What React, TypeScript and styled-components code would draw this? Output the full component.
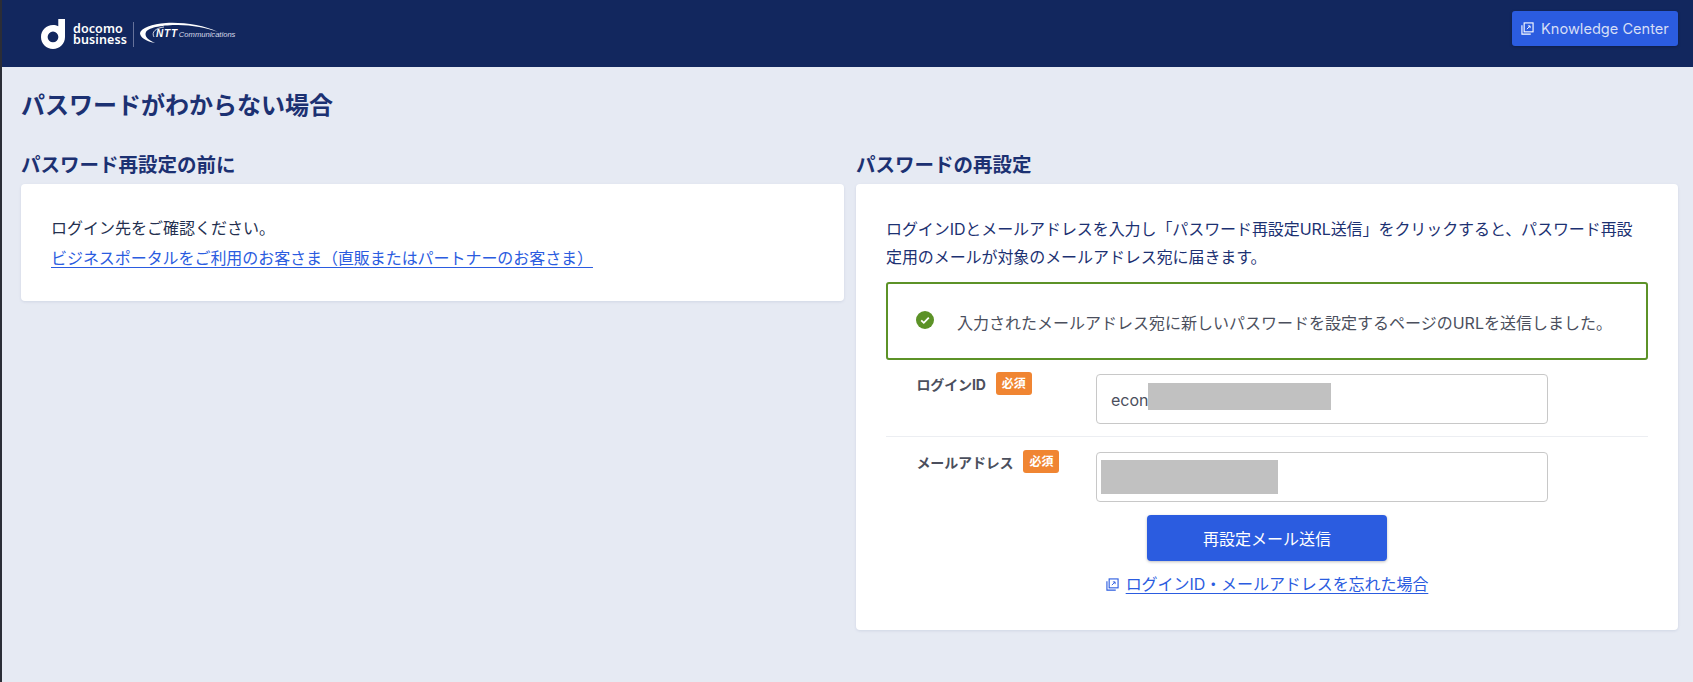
import React from "react";
import styled, { createGlobalStyle } from "styled-components";

const Global = createGlobalStyle`
  html, body { margin: 0; padding: 0; background: #e6eaf3; }
  body { font-family: Inter, "Noto Sans CJK JP", sans-serif; color: #1c3172; }
  * { box-sizing: border-box; }
`;

const Page = styled.div`
  position: relative;
  width: 1693px;
  height: 682px;
  overflow: hidden;
  border-left: 2px solid #2b2d36;
  background: #e6eaf3;
`;

const Header = styled.header`
  height: 67px;
  background: #12275e;
  display: flex;
  align-items: center;
  justify-content: space-between;
  padding: 0 15px 0 39px;
`;

const LogoRow = styled.div`
  display: flex;
  align-items: center;
  height: 67px;
  padding-top: 1px;
`;

const DocomoText = styled.div`
  font-family: "Noto Sans", sans-serif;
  color: #fff;
  font-size: 12.5px;
  font-weight: 600;
  line-height: 11.5px;
  letter-spacing: 0.1px;
  margin-left: 8px;
  width: 52px;
`;

const LogoDivider = styled.span`
  width: 1px;
  height: 25px;
  background: #66729a;
  margin: 0 6px 0 8px;
`;

const NttMark = styled.div`
  position: relative;
  width: 94px;
  height: 24px;
`;

const NttText = styled.span`
  position: absolute;
  left: 16px;
  top: 6px;
  color: #fff;
  font-family: "Liberation Sans", sans-serif;
  font-style: italic;
  font-weight: 700;
  font-size: 10px;
  letter-spacing: 0.8px;
  white-space: nowrap;
  line-height: 12px;
`;

const CommText = styled.span`
  font-weight: 400;
  font-size: 7.6px;
  letter-spacing: 0;
  color: #d8dcea;
  margin-left: 1px;
`;

const KnowledgeButton = styled.a`
  display: flex;
  align-items: center;
  gap: 7px;
  width: 166px;
  height: 35px;
  margin-top: -10px;
  padding-left: 9px;
  background: #2b5ce0;
  border-radius: 3px;
  color: #d5def6;
  font-size: 14.6px;
  box-shadow: 0 1px 3px rgba(0, 0, 0, 0.25);
`;

const Title = styled.h1`
  margin: 0;
  padding: 23px 0 0 19px;
  height: 73px;
  font-size: 24px;
  line-height: 32px;
  font-weight: 700;
  color: #1c3172;
`;

const Columns = styled.div`
  display: grid;
  grid-template-columns: 823px 822px;
  gap: 12px;
  padding-left: 19px;
  align-items: start;
`;

const Section = styled.section``;

const SectionTitle = styled.h2`
  margin: 0;
  height: 44px;
  padding-top: 12px;
  font-size: 19.5px;
  line-height: 26px;
  font-weight: 700;
  color: #1c3172;
`;

const Card = styled.div`
  background: #fff;
  border-radius: 4px;
  box-shadow: 0 1px 3px rgba(30, 50, 110, 0.1);
`;

const LeftCard = styled(Card)`
  height: 117px;
  padding: 29px 30px;
  font-size: 16px;
  line-height: 30px;
  color: #24304f;
`;

const RightCard = styled(Card)`
  height: 446px;
  padding: 31px 30px 0;
`;

const TextLink = styled.a`
  color: #2b5ce0;
  text-decoration: underline;
  text-underline-offset: 3px;
  letter-spacing: -0.06px;
  display: block;
`;

const Lead = styled.p`
  margin: 0;
  font-size: 16px;
  line-height: 28px;
  letter-spacing: -0.08px;
  color: #1c3172;
`;

const Alert = styled.div`
  height: 78px;
  margin-top: 11px;
  display: flex;
  align-items: center;
  padding: 0 20px 3px 28px;
  gap: 23px;
  border: 2px solid #5c9227;
  border-radius: 3px;
  color: #4b4f5d;
  font-size: 16px;
`;

const AlertText = styled.span`
  padding-top: 4px;
  white-space: nowrap;
`;

const FormRow = styled.div<{ $pt: number; $h: number; $b?: boolean }>`
  display: grid;
  grid-template-columns: 210px 452px;
  padding: ${({ $pt }) => $pt}px 0 0;
  height: ${({ $h }) => $h}px;
  border-bottom: ${({ $b }) => ($b ? "1px solid #eceef2" : "none")};
`;

const LabelCell = styled.div`
  display: flex;
  align-items: flex-start;
  gap: 10px;
  padding-left: 30.5px;
  font-size: 14px;
  line-height: 22px;
  font-weight: 700;
  letter-spacing: -0.15px;
  color: #4b4f5d;
`;

const Required = styled.span`
  width: 36px;
  height: 23px;
  margin-top: -2px;
  background: #f08532;
  color: #fff;
  border-radius: 3px;
  font-size: 12px;
  line-height: 23px;
  font-weight: 700;
  text-align: center;
`;

const InputBox = styled.div`
  position: relative;
  height: 50px;
  border: 1px solid #c8c8c8;
  border-radius: 4px;
  padding: 1px 14px 0;
  font-size: 16px;
  line-height: 48px;
  color: #4b4f5d;
`;

const Redaction = styled.div<{ $l: number; $t: number; $w: number; $h: number }>`
  position: absolute;
  left: ${({ $l }) => $l}px;
  top: ${({ $t }) => $t}px;
  width: ${({ $w }) => $w}px;
  height: ${({ $h }) => $h}px;
  background: #c1c1c1;
`;

const Actions = styled.div`
  display: flex;
  flex-direction: column;
  align-items: center;
`;

const SubmitButton = styled.button`
  width: 240px;
  height: 46px;
  border: 0;
  border-radius: 4px;
  background: #2b5ce0;
  color: #fff;
  font-family: inherit;
  font-size: 16px;
  box-shadow: 0 1px 3px rgba(0, 0, 0, 0.25);
`;

const ForgotRow = styled.div`
  display: flex;
  align-items: center;
  gap: 7px;
  margin-top: 11px;
  font-size: 16px;
  line-height: 24px;
`;

const ExternalIcon = ({ color, size }: { color: string; size: number }) => (
  <svg width={size} height={size} viewBox="0 0 14 14" fill="none" stroke={color} strokeWidth="1.2">
    <path d="M1 3.5V13H10.5" />
    <rect x="3.4" y="1" width="9.6" height="9.6" />
    <path d="M6.3 7.7L9.6 4.4M7.4 4.2H9.8V6.6" strokeWidth="1" />
  </svg>
);

export default function App() {
  return (
    <Page>
      <Global />
      <Header>
        <LogoRow>
          <svg width="24" height="32" viewBox="0 0 25 33">
            <path fill="#fff" fillRule="evenodd" d="M18 1H25V19.5C25 26.5 19.5 32 12.5 32S0 26.5 0 19.5 5.5 7 12.5 7C14.5 7 16.4 7.5 18 8.3ZM12.5 14A5.6 5.6 0 1 0 12.5 25.2 5.6 5.6 0 1 0 12.5 14Z" />
          </svg>
          <DocomoText>docomo<br />business</DocomoText>
          <LogoDivider />
          <NttMark>
            <svg width="94" height="24" viewBox="0 0 94 24">
              <path fill="#fff" d="M78 10C64 3 42 0 26 1 12 2 1 6 0 11 0 15 5 19 15 21 8 18 4 14 6 10 9 5 24 3 38 3 52 3 67 6 78 10Z" />
              <path fill="none" stroke="#fff" strokeWidth="0.8" d="M14 15C11 10 16 6 24 5" />
            </svg>
            <NttText>NTT<CommText>Communications</CommText></NttText>
          </NttMark>
        </LogoRow>
        <KnowledgeButton>
          <ExternalIcon color="#fff" size={13} />
          Knowledge Center
        </KnowledgeButton>
      </Header>
      <Title>パスワードがわからない場合</Title>
      <Columns>
        <Section>
          <SectionTitle>パスワード再設定の前に</SectionTitle>
          <LeftCard>
            ログイン先をご確認ください。
            <TextLink>ビジネスポータルをご利用のお客さま（直販またはパートナーのお客さま）</TextLink>
          </LeftCard>
        </Section>
        <Section>
          <SectionTitle>パスワードの再設定</SectionTitle>
          <RightCard>
            <Lead>ログインIDとメールアドレスを入力し「パスワード再設定URL送信」をクリックすると、パスワード再設定用のメールが対象のメールアドレス宛に届きます。</Lead>
            <Alert>
              <svg width="18" height="18" viewBox="0 0 18 18">
                <circle cx="9" cy="9" r="9" fill="#5c9227" />
                <path d="M5.2 9.3L7.8 11.8 12.8 6.6" fill="none" stroke="#fff" strokeWidth="1.8" />
              </svg>
              <AlertText>入力されたメールアドレス宛に新しいパスワードを設定するページのURLを送信しました。</AlertText>
            </Alert>
            <FormRow $pt={14} $h={77} $b>
              <LabelCell>ログインID<Required>必須</Required></LabelCell>
              <InputBox>econ<Redaction $l={51} $t={8} $w={183} $h={27} /></InputBox>
            </FormRow>
            <FormRow $pt={15} $h={78}>
              <LabelCell>メールアドレス<Required>必須</Required></LabelCell>
              <InputBox><Redaction $l={4} $t={7} $w={177} $h={34} /></InputBox>
            </FormRow>
            <Actions>
              <SubmitButton>再設定メール送信</SubmitButton>
              <ForgotRow>
                <ExternalIcon color="#2b5ce0" size={13} />
                <TextLink>ログインID・メールアドレスを忘れた場合</TextLink>
              </ForgotRow>
            </Actions>
          </RightCard>
        </Section>
      </Columns>
    </Page>
  );
}
